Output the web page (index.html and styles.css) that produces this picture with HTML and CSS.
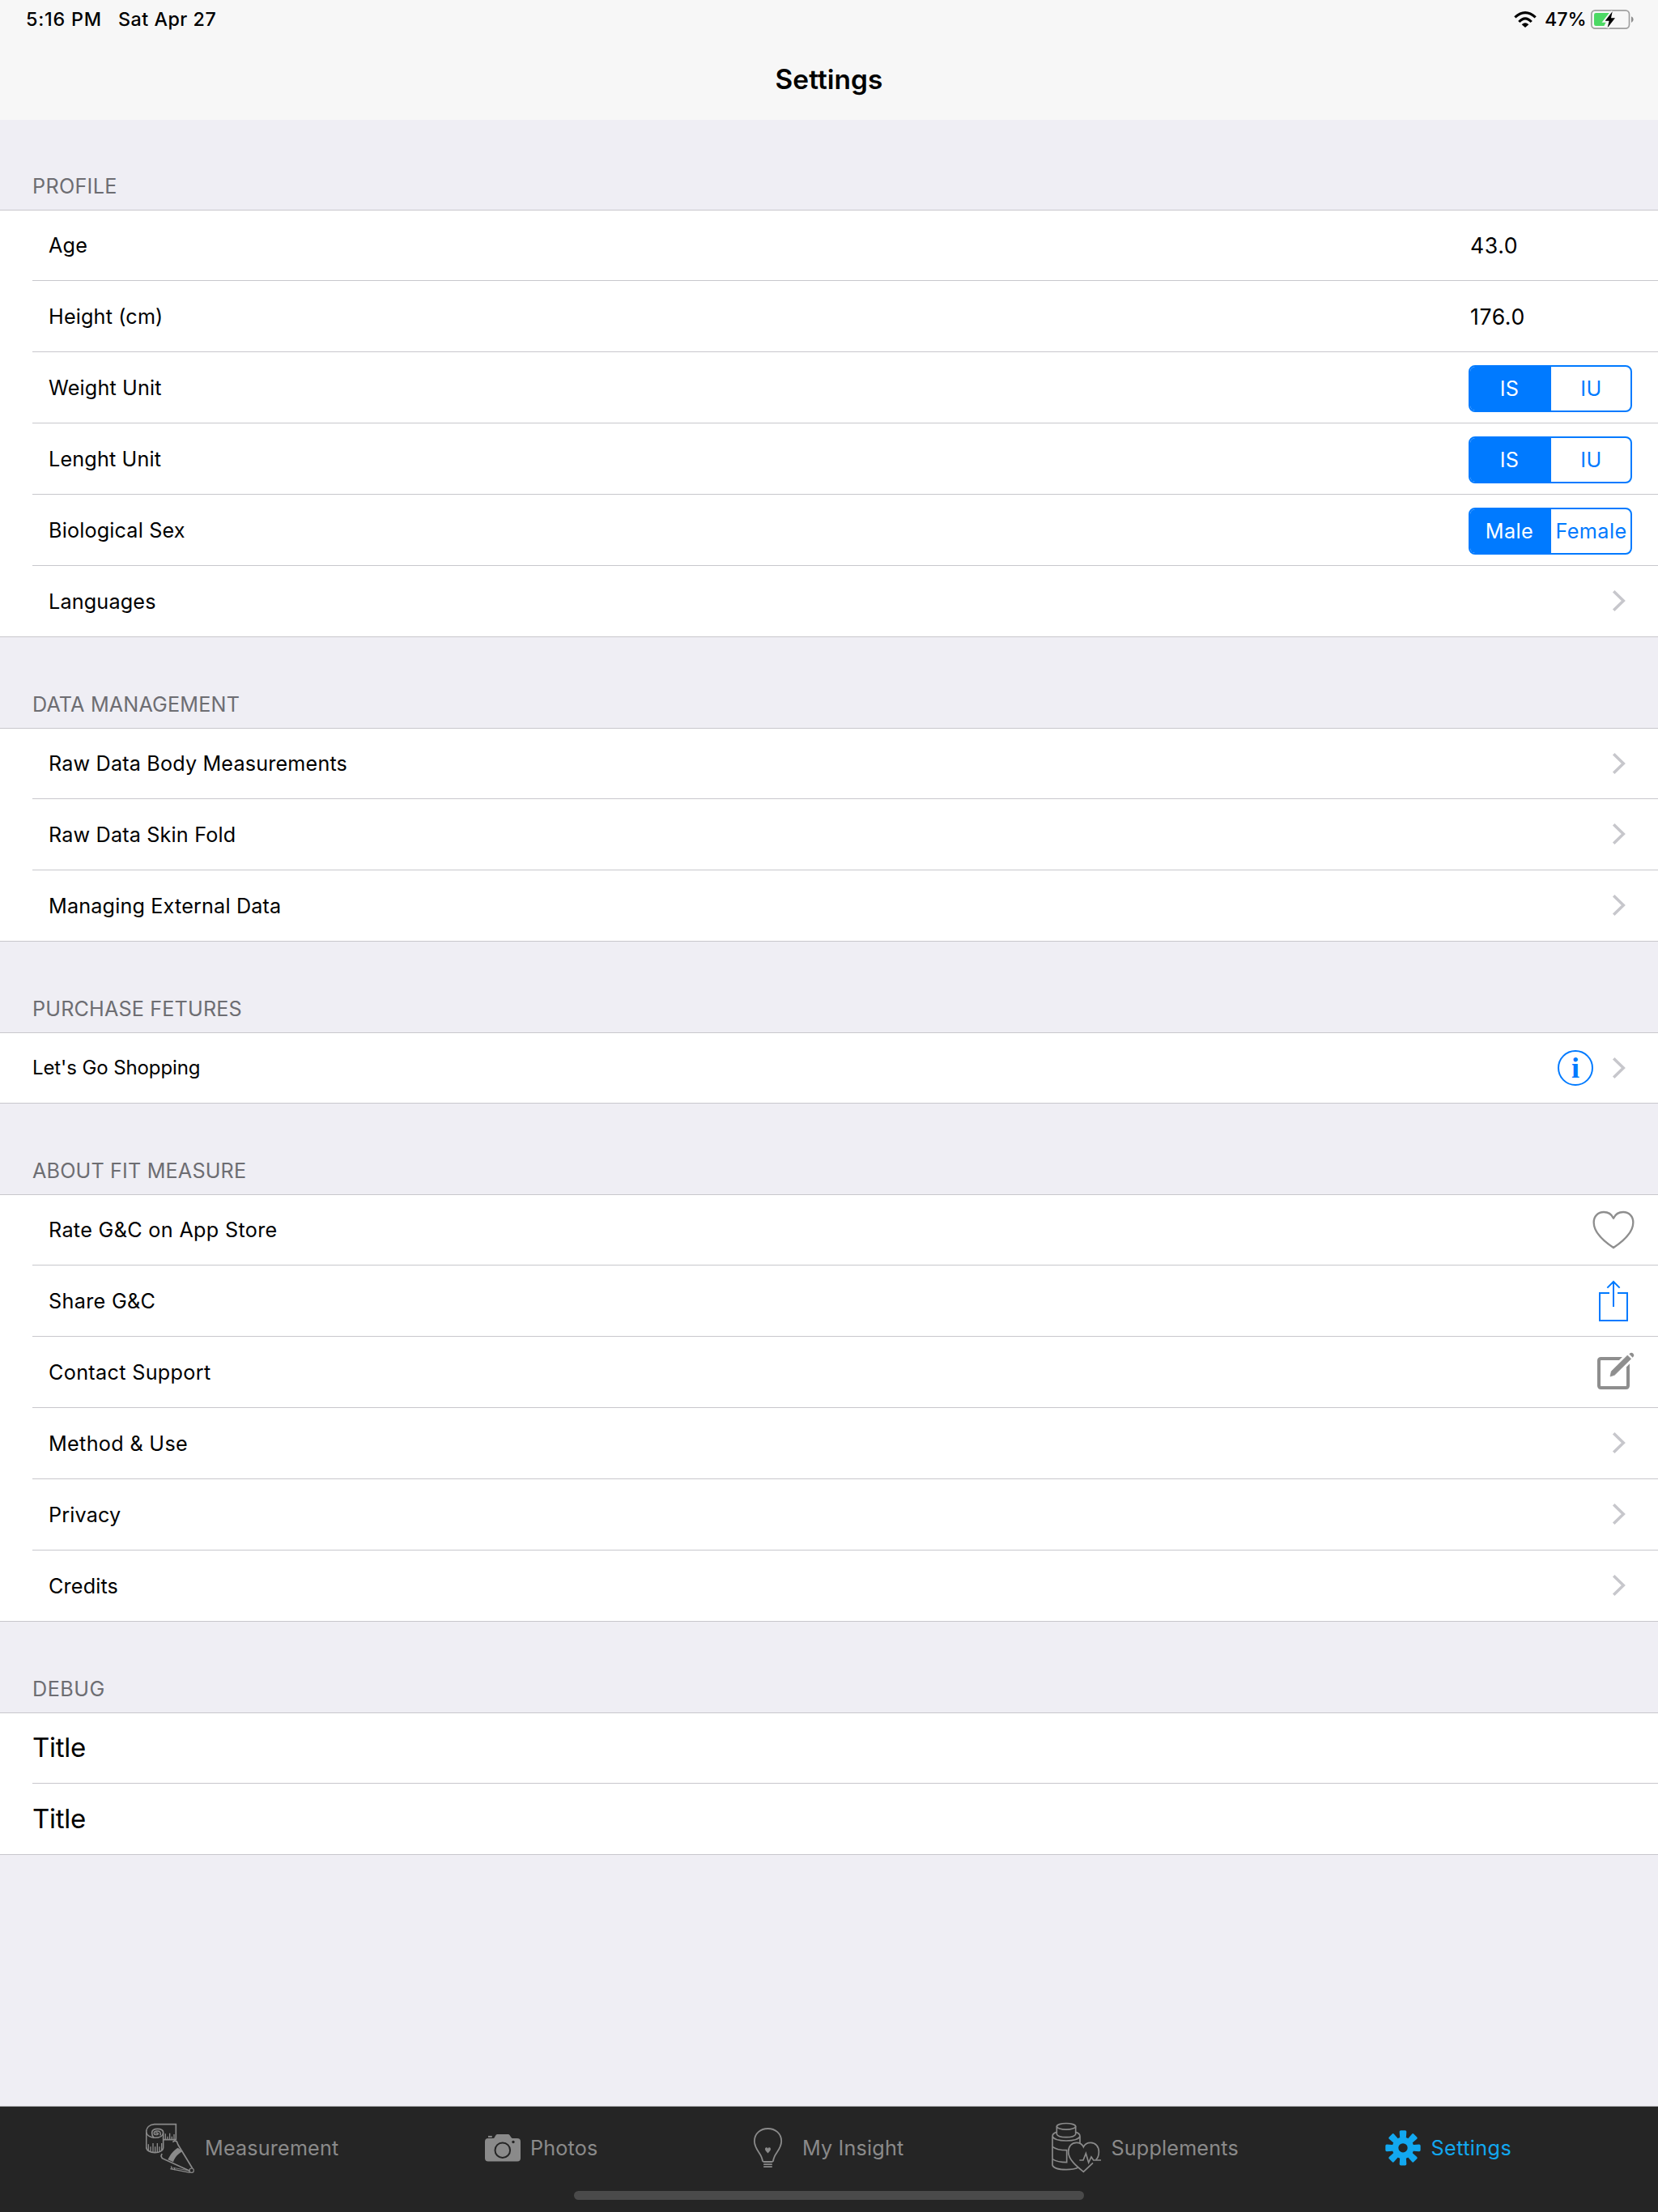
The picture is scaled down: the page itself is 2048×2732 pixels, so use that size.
FILE: index.html
```html
<!DOCTYPE html>
<html lang="en">
<head>
<meta charset="utf-8">
<title>Settings</title>
<link rel="stylesheet" href="styles.css">
</head>
<body>
<svg class="defs" aria-hidden="true">
  <symbol id="chevron" viewBox="0 0 88 86"><path d="M33.2 30.2 45.3 42 33.2 53.8" fill="none" stroke="#c7c7cc" stroke-width="3.6"/></symbol>
</svg>
<div class="screen">
  <header class="navbar">
    <div class="status">
      <span class="time">5:16 PM</span>
      <span class="date">Sat Apr 27</span>
      <svg class="wifi" viewBox="360 0 120 144">
        <path d="M370 64Q408 30 446 64M385 81Q408 56 431 81" fill="none" stroke="#000" stroke-width="9.500"/>
        <path d="M395 91Q408 79 421 91L408 102Z"/>
      </svg>
      <span class="percent">47%</span>
      <svg class="battery" viewBox="648 0 252 144">
        <rect x="653.5" y="38.5" width="140" height="67" rx="14" fill="none" stroke="#a0a0a0" stroke-width="5"/>
        <path d="M670 48H726L700 96H670Q663 96 663 89V55Q663 48 670 48Z" fill="#4cd964"/>
        <path d="M801 61Q809 65 809 72Q809 80 801 84Z" fill="#8c8c8c"/>
        <path d="M731 43 704 77H719L713 103 741 67H726Z" stroke="#f7f7f7" stroke-width="12"/>
        <path d="M731 43 704 77H719L713 103 741 67H726Z"/>
      </svg>
    </div>
    <h1 class="title">Settings</h1>
  </header>

  <main class="content">
    <h2 class="section first">PROFILE</h2>
    <div class="list">
      <div class="row"><span class="label">Age</span><span class="value">43.0</span></div>
      <div class="row"><span class="label">Height (cm)</span><span class="value">176.0</span></div>
      <div class="row"><span class="label">Weight Unit</span><div class="segmented"><span class="segment on">IS</span><span class="segment">IU</span></div></div>
      <div class="row"><span class="label">Lenght Unit</span><div class="segmented"><span class="segment on">IS</span><span class="segment">IU</span></div></div>
      <div class="row"><span class="label">Biological Sex</span><div class="segmented"><span class="segment on">Male</span><span class="segment">Female</span></div></div>
      <div class="row"><span class="label">Languages</span><svg class="chevron"><use href="#chevron"/></svg></div>
    </div>

    <h2 class="section">DATA MANAGEMENT</h2>
    <div class="list">
      <div class="row"><span class="label">Raw Data Body Measurements</span><svg class="chevron"><use href="#chevron"/></svg></div>
      <div class="row"><span class="label">Raw Data Skin Fold</span><svg class="chevron"><use href="#chevron"/></svg></div>
      <div class="row"><span class="label">Managing External Data</span><svg class="chevron"><use href="#chevron"/></svg></div>
    </div>

    <h2 class="section">PURCHASE FETURES</h2>
    <div class="list">
      <div class="row"><span class="label flush">Let's Go Shopping</span>
        <svg class="info" viewBox="1920 1276 40 86">
          <circle cx="1946" cy="1319" r="21" fill="none" stroke="#007aff" stroke-width="2"/>
          <text class="info-mark" x="1946" y="1331" text-anchor="middle">i</text>
        </svg>
        <svg class="chevron"><use href="#chevron"/></svg></div>
    </div>

    <h2 class="section">ABOUT FIT MEASURE</h2>
    <div class="list">
      <div class="row"><span class="label wide">Rate G&amp;C on App Store</span>
        <svg class="action" viewBox="0 18 420 258"><path d="M255 104C248 89 235 81 219 81C197 81 182 97 182 119C182 155 213 185 255 213C297 185 328 155 328 119C328 97 313 81 291 81C275 81 262 89 255 104Z" fill="none" stroke="#8e8e8e" stroke-width="7" stroke-linejoin="round"/></svg></div>
      <div class="row"><span class="label wide">Share G&amp;C</span>
        <svg class="action" viewBox="0 282 420 258"><path d="M240 381H204V483H306V381H270M255 432V340M232 362 255 339 278 362" fill="none" stroke="#007aff" stroke-width="6"/></svg></div>
      <div class="row"><span class="label wide">Contact Support</span>
        <svg class="action" viewBox="0 546 420 258">
          <path d="M300 624H209Q201 624 201 632V724Q201 732 209 732H301Q309 732 309 724V636" fill="none" stroke="#8e8e8e" stroke-width="12"/>
          <path d="M254 678 330 602" stroke="#fff" stroke-width="37"/>
          <path d="M243 690 247 671 307 612 320 625 259 685Z" fill="#8e8e8e" stroke="#8e8e8e" stroke-width="2" stroke-linejoin="round"/>
          <path d="M313 607 318 603Q323 600 328 605Q333 610 330 615L326 620Z" fill="#8e8e8e"/>
        </svg></div>
      <div class="row"><span class="label wide">Method &amp; Use</span><svg class="chevron"><use href="#chevron"/></svg></div>
      <div class="row"><span class="label">Privacy</span><svg class="chevron"><use href="#chevron"/></svg></div>
      <div class="row"><span class="label">Credits</span><svg class="chevron"><use href="#chevron"/></svg></div>
    </div>

    <h2 class="section short">DEBUG</h2>
    <div class="list">
      <div class="row"><span class="label plain">Title</span></div>
      <div class="row"><span class="label plain">Title</span></div>
    </div>
  </main>

  <nav class="tabbar">
    <a class="tab">
      <svg class="icon tape" viewBox="120 36 219 306" fill="none" stroke="currentColor" stroke-width="5">
        <path d="M185 158H232V101H152C134 102 122 113 122 130V185C122 198 136 206 154 206C172 206 185 198 185 187V132C185 123 176 118 164 118C151 118 143 124 143 133C143 140 145 146 150 151"/>
        <path d="M122 130C124 143 138 151 154 151C170 151 183 146 185 133M174 142C176 130 172 126 163 126C154 126 150 130 151 136C152 141 166 141 166 136C166 132 158 131 157 135" stroke-width="4.5"/>
        <path d="M130 175V198M138 184V202M147 171V204M155 184V204M163 171V204M171 184V202M179 171V198M193 136V156M201 146V156M209 134V156M217 146V156M225 138V156" stroke-width="4"/>
        <path d="M220 167 227 162 235 165 240 177 293 264M180 210 177 219 181 227 283 274"/>
        <path d="M239 188 258 201C241 209 228 222 222 241L202 232C212 211 223 198 239 188Z" fill="currentColor" stroke="none"/>
        <circle cx="290" cy="272" r="8" stroke-width="3.5"/>
        <path d="M211 266 284 280M214 257 219 267M226 262 228 271" stroke-width="4"/>
        <path d="M222 262 282 273" stroke-width="2.5"/>
      </svg>
      <span>Measurement</span>
    </a>
    <a class="tab">
      <svg class="icon camera" viewBox="599 2602 56 102">
        <path d="M603 2641H609Q610.5 2641 611 2639.5L612.500 2637Q613 2636 614.500 2636H627.500Q629 2636 629.500 2637L631.500 2640Q632 2641 633.500 2641H639Q643 2641 643 2645V2665.500Q643 2669.500 639 2669.500H603Q599 2669.500 599 2665.500V2645Q599 2641 603 2641Z" fill="currentColor"/>
        <path d="M603 2638.900H607.800" stroke="currentColor" stroke-width="2"/>
        <circle cx="620.800" cy="2655.700" r="9.300" fill="none" stroke="#252525" stroke-width="2"/>
        <circle cx="634" cy="2645.500" r="1.700" fill="#252525"/>
      </svg>
      <span>Photos</span>
    </a>
    <a class="tab">
      <svg class="icon bulb" viewBox="931 2602 60 102" fill="none" stroke="currentColor" stroke-width="1.800">
        <path d="M943.500 2670H953.500Q955 2670 955.300 2668C956 2660 965.200 2655 965.200 2644.500C965.200 2635 957.500 2629 948.500 2629C939.500 2629 931.900 2635 931.900 2644.500C931.900 2655 941 2660 941.700 2668Q942 2670 943.500 2670Z"/>
        <path d="M943.200 2673.200H953.800M943.200 2676.200H953.800"/>
        <path d="M948.500 2653.700C947.600 2651.600 945 2651.900 945 2654.300C945 2656.400 947.200 2657.600 948.500 2659.600C949.800 2657.600 952 2656.400 952 2654.300C952 2651.900 949.400 2651.600 948.500 2653.700Z" fill="currentColor" stroke="none"/>
      </svg>
      <span>My Insight</span>
    </a>
    <a class="tab">
      <svg class="icon jar" viewBox="117 36 220.500 306" fill="none" stroke="currentColor" stroke-width="5">
        <ellipse cx="171" cy="109" rx="35" ry="11.500"/>
        <path d="M136 109V138C139 146 155 149 171 149C187 149 203 146 206 138V109"/>
        <path d="M136 130C125 133 120 138 120 146V252C123 264 148 269 171 269C189 269 204 267 214 262M206 130C217 133 222 138 222 146V172M120 146C125 157 148 162 171 162C194 162 217 157 222 146"/>
        <path d="M120 184C132 193 150 197 173 197V242C150 242 132 238 120 230"/>
        <path d="M270 244 235 277C214 260 179 233 179 203C179 183 191 169 209 169C222 169 231 176 235 185C239 176 249 169 262 169C280 169 292 184 292 203C292 215 288 226 281 233"/>
        <path d="M220 234H234L244 209 254 243 264 222 272 234H300"/>
      </svg>
      <span>Supplements</span>
    </a>
    <a class="tab active">
      <svg class="icon gear" viewBox="153 36 169.500 306" fill="currentColor">
        <g transform="translate(219 188.500)">
          <g id="teeth"><path id="tooth" d="M-11-30-13-60Q-13-65-8-65H8Q13-65 13-60L11-30V30L13 60Q13 65 8 65H-8Q-13 65-13 60L-11 30Z"/><use href="#tooth" transform="rotate(90)"/></g>
          <use href="#teeth" transform="rotate(45)"/>
          <circle r="40"/>
          <circle r="17" fill="#252525"/>
        </g>
      </svg>
      <span>Settings</span>
    </a>
    <div class="home-indicator"></div>
  </nav>
</div>
</body>
</html>
```
FILE: styles.css
```css
* { box-sizing: border-box; }

body {
  margin: 0;
  background: #efeef4;
  color: #000;
  font-family: "Inter", "Liberation Sans", sans-serif;
  font-size: 25.2px;
  letter-spacing: 0.16px;
}

svg { display: block; flex: none; }
.defs { position: absolute; width: 0; height: 0; }

.screen {
  display: flex;
  flex-direction: column;
  width: 2048px;
  height: 2732px;
}

/* Navigation bar */
.navbar { height: 148px; background: #f7f7f7; }
.status {
  display: flex;
  height: 48px;
  padding-left: 32px;
  font-size: 23.3px;
  font-weight: 500;
  line-height: 47px;
  letter-spacing: 0.5px;
  white-space: nowrap;
}
.time { width: 114px; letter-spacing: 0.8px; }
.date { flex: 1; }
.wifi { width: 40px; height: 48px; }
.percent { width: 56px; letter-spacing: 0; }
.battery { width: 84px; height: 48px; }
.title {
  margin: 0;
  font-size: 33.4px;
  font-weight: 600;
  line-height: 100px;
  letter-spacing: 0.06px;
  text-align: center;
}

/* Grouped table */
.content { flex: 1; }
.section {
  display: flex;
  align-items: flex-end;
  height: 112px;
  margin: 0;
  padding-left: 40px;
  color: #6d6d72;
  font-size: 25.2px;
  font-weight: 400;
  line-height: 58px;
  letter-spacing: 0.15px;
}
.section.first { height: 111px; letter-spacing: 0.3px; }
.section.short { letter-spacing: 0.5px; }
.list { background: #fff; border-top: 1px solid #c8c7cc; }
.row {
  display: flex;
  align-items: flex-end;
  height: 88px;
  margin-left: 40px;
  border-bottom: 1px solid #c8c7cc;
}
.row:first-child { height: 87px; }
.row:last-child { margin-left: 0; padding-left: 40px; }
.label { flex: 1; padding-left: 20px; line-height: 86px; }
.label.wide { letter-spacing: 0.32px; }
.label.flush { padding-left: 0; font-size: 24px; letter-spacing: -0.1px; }
.label.plain { padding: 0 0 2px; font-size: 33px; line-height: 84px; letter-spacing: -0.25px; }
.value { width: 232px; font-size: 26.6px; line-height: 86px; letter-spacing: 0.6px; }

.segmented {
  display: flex;
  width: 202px;
  height: 58px;
  margin: 0 32px 13px 0;
  overflow: hidden;
  border: 2px solid #007aff;
  border-radius: 8px;
}
.segment {
  width: 98px;
  padding-left: 1px;
  color: #007aff;
  line-height: 54px;
  letter-spacing: 0.4px;
  text-align: center;
}
.segment.on { width: 100px; padding: 0 3px 0 0; background: #007aff; color: #fff; }

.chevron { width: 88px; height: 86px; }
.row:first-child .chevron { margin-bottom: -1px; }
.info { width: 40px; height: 86px; overflow: visible; }
.info-mark {
  fill: #007aff;
  font: bold 36px "Liberation Serif", serif;
  letter-spacing: 0;
}
.action { width: 140px; height: 86px; }

/* Tab bar */
.tabbar {
  position: relative;
  display: grid;
  grid-template-columns: 419px 332px 368px 412px 1fr;
  height: 131px;
  padding-left: 180px;
  background: #252525;
  border-top: 1px solid #a3a3a6;
}
.tab {
  display: flex;
  height: 102px;
  color: #8a8a8a;
  line-height: 102px;
  white-space: nowrap;
}
.tab.active { color: #12a8f0; letter-spacing: 0.4px; }
.icon { height: 102px; }
.tape { width: 73px; }
.camera { width: 56px; }
.bulb { width: 60px; }
.jar { width: 73.5px; }
.gear { width: 56.5px; }
.home-indicator {
  position: absolute;
  top: 104px;
  left: 709px;
  width: 630px;
  height: 11px;
  border-radius: 5.5px;
  background: #4a4a4a;
}
```
